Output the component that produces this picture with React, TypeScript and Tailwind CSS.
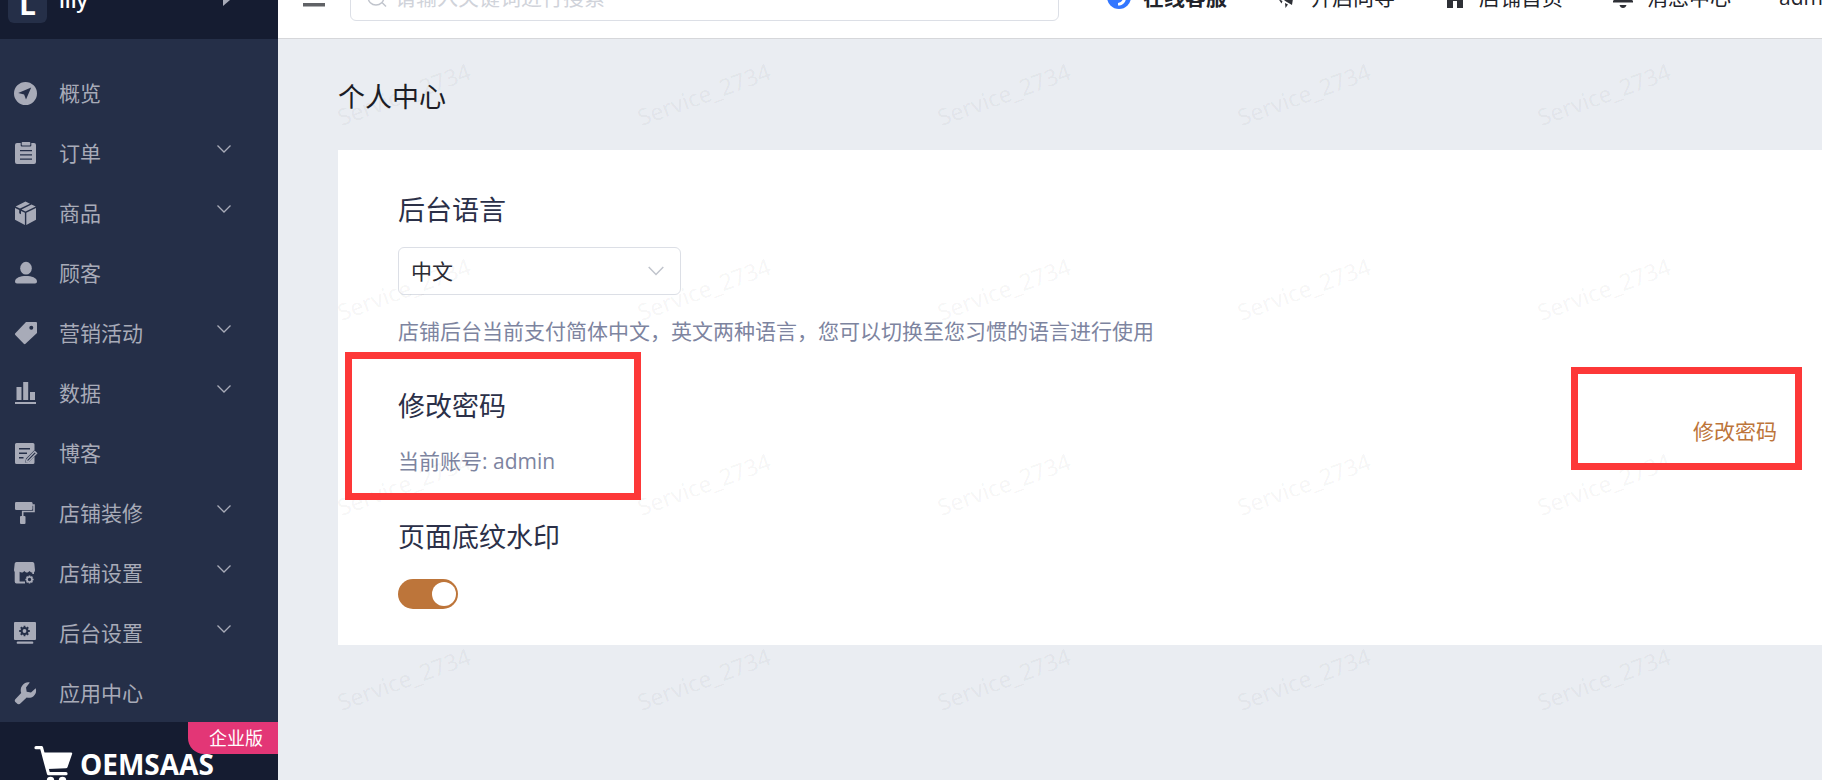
import { useState, type ReactNode } from "react";

type NavItem = { label: string; icon: ReactNode; expandable?: boolean };

function Icon({ children }: { children: ReactNode }) {
  return (
    <svg viewBox="0 0 24 24" className="size-6 shrink-0" fill="currentColor" aria-hidden="true">
      {children}
    </svg>
  );
}

const gearTeeth = [0, 45, 90, 135];

const navItems: NavItem[] = [
  {
    label: "概览",
    icon: (
      <Icon>
        <path fillRule="evenodd" d="M11.5 1a11.5 11.5 0 1 0 0 23 11.5 11.5 0 0 0 0-23zM17.2 6.6 12 18.6l-1.9-5.2L4.2 11.9z" />
      </Icon>
    ),
  },
  {
    label: "订单",
    expandable: true,
    icon: (
      <Icon>
        <path d="M8.5 1h7a.8.8 0 0 1 .8.8v2a.8.8 0 0 1-.8.8h-7a.8.8 0 0 1-.8-.8v-2A.8.8 0 0 1 8.500 1z" />
        <path fillRule="evenodd" d="M3 2h3.700v2.600a1 1 0 0 0 1 1h8.600a1 1 0 0 0 1-1V2H20a2 2 0 0 1 2 2v17a2 2 0 0 1-2 2H3a2 2 0 0 1-2-2V4a2 2 0 0 1 2-2zm3 7v1.300h12V9zm0 4.200v1.300h12v-1.300zm0 4.200v1.300h12v-1.300z" />
      </Icon>
    ),
  },
  {
    label: "商品",
    expandable: true,
    icon: (
      <Icon>
        <path d="M11.500.5 16 2.700 6 7.600 1.600 5.600zM17.500 3.400l4.300 2.200-10.300 5-4-2zM1 7l4.200 2v3.200l1.800 1V9.900l3.900 1.800V24L1 18.700zM22 7v11.700L12.300 24V11.700z" />
      </Icon>
    ),
  },
  {
    label: "顾客",
    icon: (
      <Icon>
        <ellipse cx="12" cy="7.200" rx="5.800" ry="6.400" />
        <path d="M1 20.500c0-3.700 5.500-5.500 11-5.500s11 1.800 11 5.500c0 1.300-.8 2-2 2H3c-1.200 0-2-.7-2-2z" />
      </Icon>
    ),
  },
  {
    label: "营销活动",
    expandable: true,
    icon: (
      <Icon>
        <path fillRule="evenodd" d="M12 1h10a1 1 0 0 1 1 1v10L11.500 22.700a1.200 1.200 0 0 1-1.700 0L1.300 14a1.200 1.200 0 0 1 0-1.700zm5.300 3.800a2 2 0 1 0 0 4 2 2 0 0 0 0-4z" />
      </Icon>
    ),
  },
  {
    label: "数据",
    expandable: true,
    icon: (
      <Icon>
        <path d="M2.500 6h5v13h-5zM9.200 1h5v18h-5zM16 11h5v8h-5zM1 21h21v2H1z" />
      </Icon>
    ),
  },
  {
    label: "博客",
    icon: (
      <Icon>
        <path fillRule="evenodd" d="M2.500 2H19a1.500 1.500 0 0 1 1.500 1.500V9L12 17.500l-.8 4.200 4-.9 5.300-5.200v5.900A1.500 1.500 0 0 1 19 23H2.500A1.500 1.500 0 0 1 1 21.500v-18A1.500 1.500 0 0 1 2.500 2zM5 7v1.400h11V7zm0 4.500v1.400h8v-1.400zM5 16v1.400h4.500V16z" />
        <path d="m20.700 10.400 1.900 1.900-8 8-2.200.5.5-2.300z" fill="none" stroke="currentColor" strokeWidth="1.400" />
      </Icon>
    ),
  },
  {
    label: "店铺装修",
    expandable: true,
    icon: (
      <Icon>
        <rect x="1" y="1" width="17.500" height="8" rx="1.200" />
        <path d="M18 4h2v6.500H8.700V16" fill="none" stroke="currentColor" strokeWidth="1.600" />
        <rect x="6" y="15" width="5.500" height="8" rx="1" />
      </Icon>
    ),
  },
  {
    label: "店铺设置",
    expandable: true,
    icon: (
      <Icon>
        <path
          fillRule="evenodd"
          d="M2.500 1h16A1.800 1.800 0 0 1 20.300 2.500L21 9c0 1.300-.5 2-1 2.400V13h-1.700v-1.500c-1.300 0-2.200-.6-2.800-1.500-.6.900-1.500 1.500-2.600 1.500s-2-.6-2.500-1.500c-.6.900-1.500 1.500-2.600 1.500-.9 0-1.600-.3-2.200-.8v9.800H11v2H2.500A2 2 0 0 1 .700 20.500V11C.2 10.500 0 9.800 0 9L.7 2.500A1.800 1.800 0 0 1 2.500 1z"
        />
        <circle cx="15.500" cy="18.500" r="2.500" fill="none" stroke="currentColor" strokeWidth="1.600" />
        {gearTeeth.map((a) => (
          <path key={a} d="M15.500 14.400v1.600M15.500 21v1.600" stroke="currentColor" strokeWidth="1.600" transform={`rotate(${a} 15.500 18.500)`} />
        ))}
      </Icon>
    ),
  },
  {
    label: "后台设置",
    expandable: true,
    icon: (
      <Icon>
        <path d="M1 1h20a1 1 0 0 1 1 1v16a1 1 0 0 1-1 1H1a1 1 0 0 1-1-1V2a1 1 0 0 1 1-1zM3.500 20.500h15a1.200 1.200 0 0 1 0 2.300h-15a1.200 1.200 0 0 1 0-2.300z" />
        <g stroke="#252f48" fill="none">
          <circle cx="10.500" cy="10" r="2.900" strokeWidth="2" />
          {gearTeeth.map((a) => (
            <path key={a} d="M10.500 4.700v2.600M10.500 12.700v2.600" strokeWidth="1.800" transform={`rotate(${a} 10.500 10)`} />
          ))}
        </g>
      </Icon>
    ),
  },
  {
    label: "应用中心",
    icon: (
      <Icon>
        <path d="M15.800 1.600 12 6.500l.7 4.300 4.300.7 4.700-4.200c1 3.400 0 6.300-2.200 8-2.100 1.600-4.600 1.900-6.800 1.100l-5.800 5.700a3 3 0 0 1-4.400 0l-1.200-1.200a2 2 0 0 1 0-2.600l5.900-6.200c-.9-2.700-.6-5.500 1.300-7.800C10.400 1.900 13.200.8 15.800 1.600z" />
      </Icon>
    ),
  },
];

function Sidebar() {
  const row = "flex h-[60px] w-full items-center gap-[21px] pr-[46px] pl-[14px] text-left";
  return (
    <aside className="flex w-[278px] shrink-0 flex-col bg-[#252f48] text-[#a8abb8]">
      <div className="flex h-[39px] shrink-0 items-end overflow-hidden bg-[#151c31]">
        <div className="flex h-[71px] w-full shrink-0 items-center pr-12 pl-2">
          <span className="flex size-[39px] items-center justify-center rounded-md bg-[#252f48] text-3xl font-bold text-white">
            L
          </span>
          <div className="flex flex-1 items-center justify-between pb-2 pl-3">
            <span className="font-semibold text-white">lily</span>
            <svg viewBox="0 0 8 14" className="h-3.5 w-2" fill="currentColor" aria-hidden="true">
              <path d="M1 1v12l7-6z" />
            </svg>
          </div>
        </div>
      </div>
      <nav className="shrink-0 pt-6">
        <ul>
          {navItems.map((item) => (
            <li key={item.label}>
              {item.expandable ? (
                <button type="button" className={row}>
                  {item.icon}
                  <span className="flex-1">{item.label}</span>
                  <svg viewBox="0 0 16 10" className="mb-2 h-2.5 w-4" fill="none" stroke="currentColor" strokeWidth="1.300" aria-hidden="true">
                    <path d="m1.500 1.500 6.500 6.500 6.500-6.500" />
                  </svg>
                </button>
              ) : (
                <a href="#" className={row}>
                  {item.icon}
                  <span className="flex-1">{item.label}</span>
                </a>
              )}
            </li>
          ))}
        </ul>
      </nav>
      <div className="relative -mt-px flex min-h-0 flex-1 items-start gap-1.5 overflow-hidden bg-[#151c31] pt-6 pl-[34px] text-white">
        <svg viewBox="0 0 40 40" className="size-10 shrink-0" fill="currentColor" aria-hidden="true">
          <path d="M2 1.700h5.500l7 26h17.500" fill="none" stroke="currentColor" strokeWidth="3.200" strokeLinecap="round" strokeLinejoin="round" />
          <path d="M9.500 6.500H37a1.200 1.200 0 0 1 1.100 1.600l-4.600 13.100a1.600 1.600 0 0 1-1.500 1L13.500 23z" />
          <circle cx="16.500" cy="34.500" r="3.700" />
          <circle cx="28.500" cy="34.500" r="3.700" />
        </svg>
        <span className="text-[28px] leading-9 font-bold">OEMSAAS</span>
        <span className="absolute top-0 right-0 flex h-8 w-[90px] items-center justify-center rounded-bl-2xl bg-[#e33676] pl-1.5 text-lg">
          企业版
        </span>
      </div>
    </aside>
  );
}

function Header() {
  const item = "flex shrink-0 items-center gap-3 whitespace-nowrap";
  return (
    <header className="z-10 flex h-[39px] shrink-0 items-end overflow-hidden border-b border-[#d6d7da] bg-white text-[#22242b]">
      <div className="flex h-[82px] w-full shrink-0 items-center gap-12 pl-6">
        <div className="flex flex-1 items-center gap-6">
          <button type="button" aria-label="菜单">
            <svg viewBox="0 0 24 20" className="h-5 w-6" fill="#606266" aria-hidden="true">
              <path d="M1 1h22v3H1zM1 8.500h22v3H1zM1 16h22v3.500H1z" />
            </svg>
          </button>
          <label className="flex h-12 flex-1 items-center gap-2 rounded-md border border-[#dcdfe6] pl-4">
            <svg viewBox="0 0 20 20" className="size-5 shrink-0" fill="none" stroke="#c0c4cc" strokeWidth="1.400" aria-hidden="true">
              <circle cx="9" cy="10" r="8" />
              <path d="m15 15.500 4 4" />
            </svg>
            <input
              type="search"
              aria-label="搜索"
              placeholder="请输入关键词进行搜索"
              className="min-w-0 flex-1 bg-transparent outline-none placeholder:text-[#d0d3da]"
            />
          </label>
        </div>
        <a href="#" className={`${item} font-bold`}>
          <svg viewBox="0 0 24 24" className="size-6" aria-hidden="true">
            <circle cx="12" cy="12" r="12" fill="#3377ff" />
            <path d="M11 20.500c4.500 0 7.500-2.500 8-7l-2.700-1c-.3 3-2.300 5-5.300 5.500z" fill="#fff" />
            <path d="M6.500 6c-.3 3 .5 5.500 2.500 7.500l2.500-2-1-5.500z" fill="#fff" />
          </svg>
          在线客服
        </a>
        <a href="#" className={item}>
          <svg viewBox="0 0 24 24" className="size-6" fill="#2e3036" aria-hidden="true">
            <path d="M1 9 20 1l-3 19-6-3.500zM3.500 14l4 2-1 2.500zM10 18l3 1.500-2.500 3.500z" />
          </svg>
          开启向导
        </a>
        <a href="#" className={item}>
          <svg viewBox="0 0 24 24" className="size-6" fill="#2e3036" aria-hidden="true">
            <path d="M12 2 1 11.500h3V23h6v-7h4v7h6V11.500h3z" />
          </svg>
          店铺首页
        </a>
        <a href="#" className={item}>
          <svg viewBox="0 0 24 24" className="size-6" fill="#2e3036" aria-hidden="true">
            <path d="M12 0a7.500 7.500 0 0 0-7.500 7.500V13L2 16v1.500h20V16l-2.500-3V7.500A7.500 7.500 0 0 0 12 0zM8.500 20h7c-.5 1.800-1.800 3-3.500 3s-3-1.200-3.500-3z" />
          </svg>
          消息中心
        </a>
        <a href="#" className="w-[43px] shrink-0 overflow-hidden whitespace-nowrap">
          admin
        </a>
      </div>
    </header>
  );
}

function Watermark() {
  return (
    <div aria-hidden="true" className="pointer-events-none absolute inset-y-0 right-0 left-14 overflow-hidden">
      {[0, 1, 2, 3].map((r) => (
        <div key={r} className="flex h-[195px] pt-[39px]">
          {[0, 1, 2, 3, 4].map((c) => (
            <div key={c} className="w-[300px] shrink-0">
              <span className="inline-block -rotate-20 font-['Noto_Sans',sans-serif] text-[23px] leading-8 text-black/5">
                Service_2734
              </span>
            </div>
          ))}
        </div>
      ))}
    </div>
  );
}

export default function App() {
  const [watermark, setWatermark] = useState(true);
  const heading = "text-[27px] leading-9 text-[#2b3048]";
  return (
    <div className="flex h-screen overflow-hidden font-['Open_Sans','Noto_Sans_CJK_SC',sans-serif] text-[21px] leading-8">
      <Sidebar />
      <div className="flex min-w-0 flex-1 flex-col bg-[#eaedf2]">
        <Header />
        <main className="relative flex-1 pt-10 pl-[60px]">
          <h1 className="text-[27px] leading-9 text-[#1c1d26]">个人中心</h1>
          <div className="mt-[35px] bg-white pt-[42px] pb-9 pl-[60px]">
            <section>
              <h2 className={heading}>
                <label htmlFor="language">后台语言</label>
              </h2>
              <div className="relative mt-[19px] w-[283px]">
                <select
                  id="language"
                  className="block h-12 w-full appearance-none rounded-md border border-[#dcdfe6] bg-white pl-3 text-[#2b2b33]"
                >
                  <option>中文</option>
                  <option>English</option>
                </select>
                <svg viewBox="0 0 16 10" className="pointer-events-none absolute top-[19px] right-[17px] h-2.5 w-4" fill="none" stroke="#c0c4cc" strokeWidth="1.500" aria-hidden="true">
                  <path d="m.7 1 7.300 7.500L15.300 1" />
                </svg>
              </div>
              <p className="mt-5 text-[#7d84a0]">
                店铺后台当前支付简体中文，英文两种语言，您可以切换至您习惯的语言进行使用
              </p>
            </section>

            <section className="relative mt-[41px] flex items-center justify-between pr-[45px]">
              <div>
                <h2 className={heading}>修改密码</h2>
                <p className="mt-[21px] text-[#7d84a0]">当前账号: admin</p>
              </div>
              <a href="#" className="pb-1 text-[#bd753a]">
                修改密码
              </a>
              <div className="pointer-events-none absolute -top-9 -left-[53px] z-10 h-[148px] w-[296px] border-7 border-[#fd3838]" />
              <div className="pointer-events-none absolute -top-[21px] right-5 z-10 h-[103px] w-[231px] border-7 border-[#fd3838]" />
            </section>

            <section className="mt-[42px]">
              <h2 className={heading}>
                <label htmlFor="watermark">页面底纹水印</label>
              </h2>
              <label className="mt-6 flex h-[30px] w-[60px] cursor-pointer items-center rounded-full bg-[#c0c4cc] px-0.5 has-checked:justify-end has-checked:bg-[#bd753a]">
                <input
                  id="watermark"
                  type="checkbox"
                  role="switch"
                  className="sr-only"
                  checked={watermark}
                  onChange={(e) => setWatermark(e.target.checked)}
                />
                <span className="size-6 rounded-full bg-white" />
              </label>
            </section>
          </div>
          {watermark && <Watermark />}
        </main>
      </div>
    </div>
  );
}
